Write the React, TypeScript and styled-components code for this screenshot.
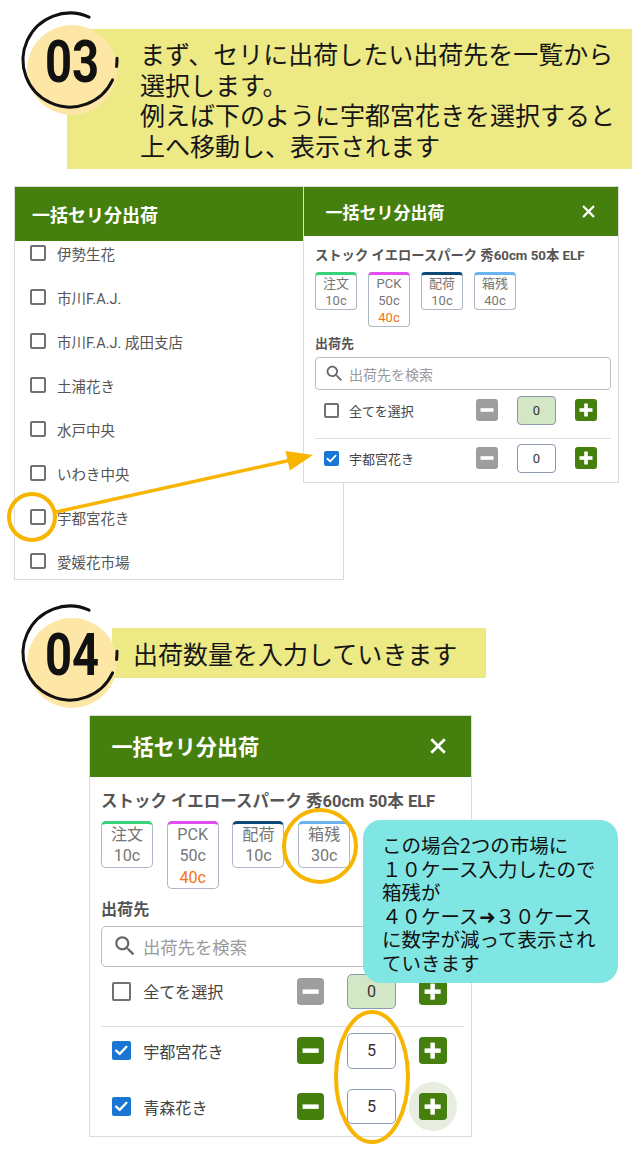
import React from "react";
import styled, { createGlobalStyle } from "styled-components";

const GREEN = "#457f0e";
const AMBER = "#f7b500";
const JP = `"Noto Sans CJK JP", "Noto Sans", sans-serif`;
const UI = `Roboto, "Noto Sans CJK JP", sans-serif`;
const u = (n: number) => `calc(${n}px * var(--k, 1))`;

const GlobalStyle = createGlobalStyle`
  html, body { margin: 0; padding: 0; background: #ffffff; }
  body { font-family: ${UI}; }
  #root { width: 632px; }
`;

const Page = styled.div`
  width: 632px;
  min-height: 1175px;
  position: relative;
  overflow: hidden;
`;

/* ---------------- step headers ---------------- */
const StepOne = styled.div`
  position: relative;
  padding-top: 29px;
`;

const StepOneBox = styled.div`
  margin-left: 67px;
  height: 140px;
  box-sizing: border-box;
  padding: 9px 0 0 73px;
  background: #ede985;
  font-family: ${JP};
  font-size: 25px;
  line-height: 30.5px;
  color: #161616;
  white-space: nowrap;
`;

const StepTwo = styled.div`
  position: relative;
  height: 110px;
  margin-top: 18px;
  display: flex;
  align-items: center;
`;

const StepTwoBox = styled.div`
  margin-left: 112px;
  width: 374px;
  height: 50px;
  box-sizing: border-box;
  padding-left: 21px;
  background: #ede985;
  font-family: ${JP};
  font-size: 25px;
  line-height: 50px;
  color: #161616;
  white-space: nowrap;
`;

const BadgeWrap = styled.div<{ $top: number }>`
  position: absolute;
  left: 20px;
  top: ${(p) => p.$top}px;
  width: 100px;
  height: 112px;
`;

const BadgeArt = styled.svg`
  position: absolute;
  left: 0;
  top: 0;
  overflow: visible;
`;

const BadgeNum = styled.div`
  position: absolute;
  left: 0;
  top: 0;
  width: 100px;
  height: 100px;
  display: flex;
  align-items: center;
  justify-content: center;
  font-family: Roboto, "Liberation Sans", sans-serif;
  font-weight: 700;
  font-size: 59px;
  line-height: 1;
  color: #111;
  transform: translate(2px, 1px) scaleX(0.8);
`;

const Badge = ({ n, top }: { n: string; top: number }) => (
  <BadgeWrap $top={top}>
    <BadgeArt width="100" height="112" viewBox="0 0 100 112">
      <circle cx="52" cy="60" r="45" fill="#fde6a6" />
      <path
        d="M 92.6 69.9 A 47 47 0 1 1 69.1 7.07"
        fill="none"
        stroke="#111"
        strokeWidth="3"
        strokeLinecap="round"
      />
      <path
        d="M 96.97 48.36 A 47 47 0 0 1 96.54 56.54"
        fill="none"
        stroke="#111"
        strokeWidth="3"
        strokeLinecap="round"
      />
    </BadgeArt>
    <BadgeNum>{n}</BadgeNum>
  </BadgeWrap>
);

/* ---------------- demo areas ---------------- */
const Demo = styled.div`
  position: relative;
  margin-top: 17px;
  height: 394px;
`;

const Floating = styled.div`
  position: absolute;
  left: 303px;
  top: 0;
`;

const Overlay = styled.svg`
  position: absolute;
  left: 0;
  top: 0;
  pointer-events: none;
  overflow: visible;
`;

const DemoTwo = styled.div`
  position: relative;
  margin-top: 7px;
  padding-left: 89px;
`;

const Tip = styled.div`
  position: absolute;
  left: 363px;
  top: 105px;
  width: 255px;
  box-sizing: border-box;
  padding: 13px 10px 9px 19px;
  background: #80e6e4;
  border-radius: 18px;
  font-family: ${JP};
  font-size: 19.5px;
  line-height: 23.5px;
  color: #111;
  white-space: nowrap;
`;

/* ---------------- list panel (left) ---------------- */
const ListPanel = styled.div`
  margin-left: 14px;
  width: 330px;
  height: 394px;
  box-sizing: border-box;
  border: 1px solid #dadada;
  background: #fff;
  display: flex;
  flex-direction: column;
`;

const ListHeader = styled.div`
  height: 54px;
  flex: none;
  background: ${GREEN};
  display: flex;
  align-items: center;
  padding-left: 17px;
  color: #fff;
  font-family: ${JP};
  font-weight: 700;
  font-size: 18px;
`;

const ListViewport = styled.div`
  flex: 1;
  overflow: hidden;
`;

const ListScroll = styled.div`
  margin-top: -10px;
`;

const ListRow = styled.div`
  height: 44px;
  display: flex;
  align-items: center;
  gap: 11px;
  padding-left: 15px;
  font-family: ${UI};
  font-size: 14.5px;
  color: #555;
`;

/* ---------------- checkbox ---------------- */
const CheckBox = styled.span<{ $on?: boolean; $size: string }>`
  width: ${(p) => p.$size};
  height: ${(p) => p.$size};
  flex: none;
  box-sizing: border-box;
  border-radius: 2px;
  border: ${(p) => (p.$on ? "none" : "2px solid #707070")};
  background: ${(p) => (p.$on ? "#1976d2" : "#fff")};
  display: grid;
  place-items: center;
  svg {
    width: 100%;
    height: 100%;
  }
`;

const Check = ({ on, size }: { on?: boolean; size: string }) => (
  <CheckBox $on={on} $size={size}>
    {on && (
      <svg viewBox="0 0 16 16">
        <path
          d="M3.6 8.3 L6.6 11.1 L12.4 5"
          fill="none"
          stroke="#fff"
          strokeWidth="2"
          strokeLinecap="round"
          strokeLinejoin="round"
        />
      </svg>
    )}
  </CheckBox>
);

/* ---------------- modal panel ---------------- */
const Panel = styled.div<{ $k: number; $w: number }>`
  --k: ${(p) => p.$k};
  width: ${(p) => p.$w}px;
  box-sizing: border-box;
  border: 1px solid #dcdcdc;
  background: #fff;
  font-family: ${UI};
`;

const PanelHeader = styled.div`
  height: ${u(49)};
  background: ${GREEN};
  display: flex;
  align-items: center;
  justify-content: space-between;
  padding: 0 calc(14px + 9px * var(--k, 1)) 0 21.5px;
  color: #fff;
`;

const PanelTitle = styled.div`
  font-family: ${JP};
  font-weight: 700;
  font-size: ${u(17)};
`;

const CloseIcon = styled.svg`
  width: ${u(13)};
  height: ${u(13)};
`;

const PanelBody = styled.div`
  padding: ${u(12)} 7px ${u(6)} 11px;
`;

const ProductName = styled.div`
  font-weight: 700;
  font-size: ${u(13.3)};
  line-height: ${u(16)};
  color: #555;
  white-space: nowrap;
`;

const Chips = styled.div`
  display: flex;
  align-items: flex-start;
  gap: ${u(11)};
  margin-top: ${u(8)};
`;

const Chip = styled.div<{ $c: string }>`
  width: ${u(42)};
  box-sizing: border-box;
  border: 1px solid #aeb7c6;
  border-top: ${u(3)} solid ${(p) => p.$c};
  border-radius: ${u(4)};
  text-align: center;
  font-size: ${u(13)};
  line-height: ${u(17)};
  color: #777;
`;

const ChipAlert = styled.div`
  color: #f47216;
`;

const FieldLabel = styled.div`
  margin-top: ${u(8)};
  font-family: ${JP};
  font-weight: 700;
  font-size: ${u(13)};
  line-height: ${u(16)};
  color: #555;
`;

const Search = styled.div`
  margin-top: ${u(6)};
  height: ${u(33)};
  box-sizing: border-box;
  border: 1px solid #bdbdbd;
  border-radius: ${u(4)};
  display: flex;
  align-items: center;
  gap: ${u(4)};
  padding-left: ${u(8)};
  font-family: ${JP};
  font-size: ${u(14)};
  color: #9a9a9a;
  svg {
    width: ${u(21)};
    height: ${u(21)};
  }
`;

const Row = styled.div<{ $gap: number }>`
  margin-top: ${(p) => u(p.$gap)};
  height: ${u(36)};
  display: flex;
  align-items: center;
  padding: 0 ${u(14)} 0 ${u(9)};
`;

const RowLabel = styled.div`
  flex: 1;
  margin-left: ${u(10)};
  font-size: ${u(13)};
  color: #444;
  white-space: nowrap;
`;

const Controls = styled.div`
  display: flex;
  align-items: center;
  gap: ${u(19)};
`;

const Divider = styled.div`
  margin-top: ${u(10)};
  height: 1px;
  background: #dedede;
`;

const StepBtn = styled.span<{ $on: boolean }>`
  position: relative;
  width: ${u(22)};
  height: ${u(22)};
  flex: none;
  border-radius: ${u(3)};
  background: ${(p) => (p.$on ? GREEN : "#9e9e9e")};
  display: block;
  svg {
    display: block;
    width: 100%;
    height: 100%;
  }
`;

const Halo = styled.span<{ $on?: boolean }>`
  position: relative;
  display: inline-flex;
  &::before {
    content: "";
    display: ${(p) => (p.$on ? "block" : "none")};
    position: absolute;
    left: 50%;
    top: 50%;
    width: ${u(39)};
    height: ${u(39)};
    margin: ${u(-19.5)} 0 0 ${u(-19.5)};
    border-radius: 50%;
    background: rgba(69, 127, 14, 0.13);
  }
`;

const NumBox = styled.div<{ $tint?: boolean }>`
  width: ${u(39)};
  height: ${u(29)};
  box-sizing: border-box;
  border: ${u(1.5)} solid #8b98ad;
  border-radius: ${u(4)};
  background: ${(p) => (p.$tint ? "#d3e6c6" : "#fff")};
  display: grid;
  place-items: center;
  font-size: ${u(13)};
  color: #333;
`;

const MinusIcon = () => (
  <svg viewBox="0 0 22 22">
    <rect x="4.5" y="9.2" width="13" height="3.6" fill="#fff" />
  </svg>
);

const PlusIcon = () => (
  <svg viewBox="0 0 22 22">
    <rect x="4.5" y="9.2" width="13" height="3.6" fill="#fff" />
    <rect x="9.2" y="4.5" width="3.6" height="13" fill="#fff" />
  </svg>
);

type RowData = {
  label: string;
  checked?: boolean;
  value: string;
  minusOn: boolean;
  tint?: boolean;
  halo?: boolean;
  gap: number;
};

const QtyRow = ({ r }: { r: RowData }) => (
  <Row $gap={r.gap}>
    <Check on={r.checked} size={u(15)} />
    <RowLabel>{r.label}</RowLabel>
    <Controls>
      <StepBtn $on={r.minusOn}>
        <MinusIcon />
      </StepBtn>
      <NumBox $tint={r.tint}>{r.value}</NumBox>
      <Halo $on={r.halo}>
        <StepBtn $on>
          <PlusIcon />
        </StepBtn>
      </Halo>
    </Controls>
  </Row>
);

const SearchIcon = () => (
  <svg viewBox="0 0 24 24">
    <path
      fill="#666"
      d="M15.5 14h-.79l-.28-.27C15.41 12.59 16 11.110 16 9.5 16 5.91 13.09 3 9.5 3S3 5.91 3 9.5 5.91 16 9.5 16c1.61 0 3.09-.59 4.23-1.57l.27.28v.79l5 4.99L20.49 19l-4.99-5zm-6 0C7.01 14 5 11.99 5 9.5S7.01 5 9.5 5 14 7.01 14 9.5 11.99 14 9.5 14z"
    />
  </svg>
);

const ShipPanel = ({
  k,
  w,
  stock,
  rows,
}: {
  k: number;
  w: number;
  stock: string;
  rows: RowData[];
}) => {
  const chips = [
    { c: "#39d17a", t: "注文", v: "10c" },
    { c: "#e24df0", t: "PCK", v: "50c", alert: "40c" },
    { c: "#0e4a78", t: "配荷", v: "10c" },
    { c: "#6bb3f0", t: "箱残", v: stock },
  ];
  const [first, ...rest] = rows;
  return (
    <Panel $k={k} $w={w}>
      <PanelHeader>
        <PanelTitle>一括セリ分出荷</PanelTitle>
        <CloseIcon viewBox="0 0 14 14">
          <path
            d="M2 2 L12 12 M12 2 L2 12"
            stroke="#fff"
            strokeWidth="2.4"
            strokeLinecap="square"
          />
        </CloseIcon>
      </PanelHeader>
      <PanelBody>
        <ProductName>ストック イエロースパーク 秀60cm 50本 ELF</ProductName>
        <Chips>
          {chips.map((c) => (
            <Chip key={c.t} $c={c.c}>
              <div>{c.t}</div>
              <div>{c.v}</div>
              {c.alert && <ChipAlert>{c.alert}</ChipAlert>}
            </Chip>
          ))}
        </Chips>
        <FieldLabel>出荷先</FieldLabel>
        <Search>
          <SearchIcon />
          出荷先を検索
        </Search>
        <QtyRow r={first} />
        <Divider />
        {rest.map((r) => (
          <QtyRow key={r.label} r={r} />
        ))}
      </PanelBody>
    </Panel>
  );
};

const markets = [
  "伊勢生花",
  "市川F.A.J.",
  "市川F.A.J. 成田支店",
  "土浦花き",
  "水戸中央",
  "いわき中央",
  "宇都宮花き",
  "愛媛花市場",
];

export default function App() {
  return (
    <Page>
      <GlobalStyle />
      <StepOne>
        <StepOneBox>
          まず、セリに出荷したい出荷先を一覧から
          <br />
          選択します。
          <br />
          例えば下のように宇都宮花きを選択すると
          <br />
          上へ移動し、表示されます
        </StepOneBox>
        <Badge n="03" top={10} />
      </StepOne>

      <Demo>
        <ListPanel>
          <ListHeader>一括セリ分出荷</ListHeader>
          <ListViewport>
            <ListScroll>
              {markets.map((m) => (
                <ListRow key={m}>
                  <Check size="16px" />
                  {m}
                </ListRow>
              ))}
            </ListScroll>
          </ListViewport>
        </ListPanel>
        <Floating>
          <ShipPanel
            k={1}
            w={316}
            stock="40c"
            rows={[
              { label: "全てを選択", value: "0", minusOn: false, tint: true, gap: 2 },
              { label: "宇都宮花き", checked: true, value: "0", minusOn: false, gap: 1 },
            ]}
          />
        </Floating>
        <Overlay width="632" height="394" viewBox="0 0 632 394">
          <circle cx="32" cy="331" r="23" fill="none" stroke={AMBER} strokeWidth="4" />
          <line x1="56" y1="326" x2="289" y2="274.5" stroke={AMBER} strokeWidth="3.5" />
          <polygon points="313,269 285.5,265 289.9,284.5" fill={AMBER} />
        </Overlay>
      </Demo>

      <StepTwo>
        <StepTwoBox>出荷数量を入力していきます</StepTwoBox>
        <Badge n="04" top={5} />
      </StepTwo>

      <DemoTwo>
        <ShipPanel
          k={1.24}
          w={383}
          stock="30c"
          rows={[
            { label: "全てを選択", value: "0", minusOn: false, tint: true, gap: 2 },
            { label: "宇都宮花き", checked: true, value: "5", minusOn: true, gap: 1 },
            { label: "青森花き", checked: true, value: "5", minusOn: true, halo: true, gap: 9 },
          ]}
        />
        <Overlay width="632" height="440" viewBox="0 0 632 440">
          <circle cx="320" cy="131" r="36" fill="none" stroke={AMBER} strokeWidth="4" />
          <ellipse cx="372" cy="362" rx="36" ry="65" fill="none" stroke={AMBER} strokeWidth="4" />
        </Overlay>
        <Tip>
          この場合2つの市場に
          <br />
          １０ケース入力したので
          <br />
          箱残が
          <br />
          ４０ケース➜３０ケース
          <br />
          に数字が減って表示され
          <br />
          ていきます
        </Tip>
      </DemoTwo>
    </Page>
  );
}
